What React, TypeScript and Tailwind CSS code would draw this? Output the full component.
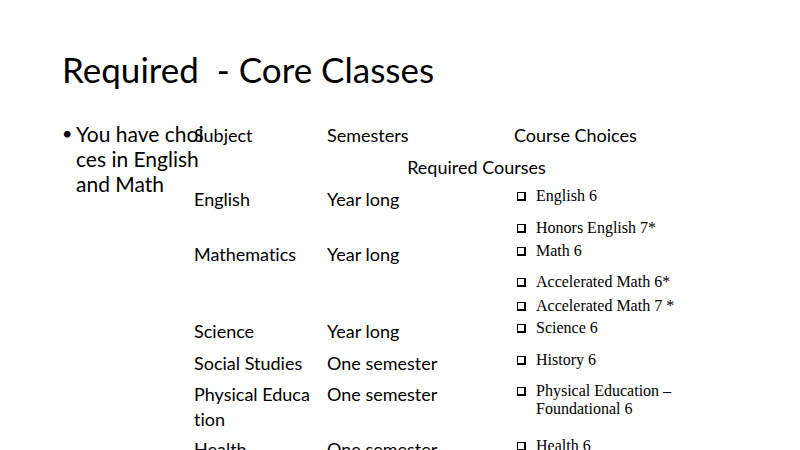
import React from "react";

const sans = { fontFamily: "Lato, 'Liberation Sans', sans-serif" };

function Box() {
  return (
    <span className="inline-block w-[9px] h-[9px] border border-black border-r-2 border-b-2 mt-[5px] shrink-0" />
  );
}

function Item({ lines, mb }: { lines: string[]; mb: string }) {
  return (
    <div className={`flex items-start ${mb}`}>
      <div className="w-[20px] flex pl-[1px]">
        <Box />
      </div>
      <div className="text-[16px] leading-[18px] text-black" style={{ fontFamily: "'Liberation Serif', serif" }}>
        {lines.map((l) => (
          <div key={l} className="whitespace-pre">{l}</div>
        ))}
      </div>
    </div>
  );
}

type Row = {
  h: string;
  subj: string[];
  sem: string;
  items: { lines: string[]; mb: string }[];
};

const rows: Row[] = [
  {
    h: "h-[55px]",
    subj: ["English"],
    sem: "Year long",
    items: [
      { lines: ["English 6"], mb: "mb-[14px]" },
      { lines: ["Honors English 7*"], mb: "" },
    ],
  },
  {
    h: "h-[77px]",
    subj: ["Mathematics"],
    sem: "Year long",
    items: [
      { lines: ["Math 6"], mb: "mb-[13px]" },
      { lines: ["Accelerated Math 6*"], mb: "mb-[6px]" },
      { lines: ["Accelerated Math 7 *"], mb: "" },
    ],
  },
  { h: "h-[32px]", subj: ["Science"], sem: "Year long", items: [{ lines: ["Science 6"], mb: "" }] },
  { h: "h-[31px]", subj: ["Social Studies"], sem: "One semester", items: [{ lines: ["History 6"], mb: "" }] },
  {
    h: "h-[55px]",
    subj: ["Physical Educa", "tion"],
    sem: "One semester",
    items: [{ lines: ["Physical Education \u2013", "Foundational 6"], mb: "" }],
  },
  { h: "h-[40px]", subj: ["Health"], sem: "One semester", items: [{ lines: ["Health 6"], mb: "" }] },
];

export default function App() {
  return (
    <div
      className="relative w-[800px] h-[450px] overflow-hidden bg-white text-black [font-variant-ligatures:none]"
      style={sans}
    >
      <div className="pl-[62px] pt-[46px]">
        <h1 className="text-[35px] leading-[47px] whitespace-pre font-normal">Required  - Core Classes</h1>
        <div className="flex mt-[28px] text-[21px] leading-[25px]">
          <span className="w-[14px] text-[18px]">•</span>
          <div>
            <div>You have choi</div>
            <div>ces in English</div>
            <div>and Math</div>
          </div>
        </div>
      </div>

      <div className="absolute left-[194px] top-[123px] w-[565px] text-[18px] leading-[25px]">
        <div className="flex h-[32px]">
          <div className="w-[133px]">Subject</div>
          <div className="w-[187px]">Semesters</div>
          <div className="flex-1">Course Choices</div>
        </div>
        <div className="h-[32px] text-center">Required Courses</div>
        {rows.map((r) => (
          <div key={r.subj.join("")} className={`flex ${r.h}`}>
            <div className="w-[133px]">
              {r.subj.map((s) => (
                <div key={s}>{s}</div>
              ))}
            </div>
            <div className="w-[187px]">{r.sem}</div>
            <div className="flex-1 pl-[2px]">
              {r.items.map((it) => (
                <Item key={it.lines[0]} lines={it.lines} mb={it.mb} />
              ))}
            </div>
          </div>
        ))}
      </div>
    </div>
  );
}
